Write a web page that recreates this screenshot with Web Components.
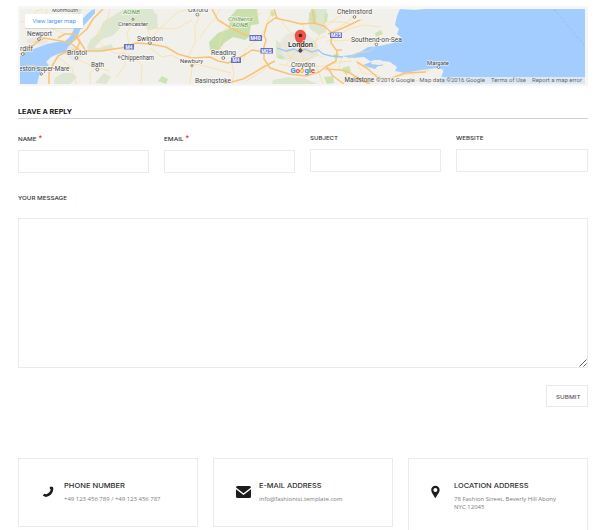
<!DOCTYPE html>
<html lang="en"><head><meta charset="utf-8"><title>Contact</title>
<style>
html,body{margin:0;background:#fff}
body{width:604px;height:530px;overflow:hidden;font-family:"Open Sans","Noto Sans",sans-serif;color:#222}
</style></head><body>
<contact-page></contact-page>
<script>
const define=(name,html,setup)=>customElements.define(name,class extends HTMLElement{
  connectedCallback(){
    if(this.shadowRoot)return;
    const t=document.createElement('template');t.innerHTML=html;
    this.attachShadow({mode:'open'}).append(t.content.cloneNode(true));
    if(setup)setup(this,this.shadowRoot);
  }
});

/* One line of text stretched to a given measure. */
define('fit-text',`<style>:host{display:block;white-space:nowrap}span{display:inline-block;transform-origin:0 0}</style><span><slot></slot></span>`,(el,root)=>{
  const s=root.querySelector('span'),w=+el.getAttribute('measure');
  s.style.transform='scaleX('+w/s.getBoundingClientRect().width+')';
  el.style.width=w+'px';
});

define('area-map',`<style>
:host{display:block;box-sizing:border-box;height:80px;padding:3px 3px 2px 2px;background:#f6f6f6}
svg{display:block;width:565px;height:75px;font-family:Roboto,sans-serif}
.l text{fill:#484848;stroke:#fff;stroke-width:1.3;paint-order:stroke;stroke-opacity:.7}
.m{fill:none;stroke:#f9c377;stroke-width:1.5;stroke-linejoin:round}.n{fill:none;stroke:#fbdc9a;stroke-width:.7}
.d circle{fill:#fff;stroke:#555;stroke-width:.7}
.s rect{fill:#6470c4}.s text{fill:#fff;font-size:4.5px;font-weight:700}
</style>
<svg viewBox="20 9 565 75">
<rect x="20" y="9" width="565" height="75" fill="#f2f0eb"/>
<g fill="#dde6d0">
<path d="M72 9 82 9 78 20 72 25Z M103 22 124 9 153 9 157 19 157 28 149 30 142 23 130 26 122 24 118 31 112 36 102 39 94 48 87 47 91 39 99 33Z M87 47 99 48 111 44 114 49 103 52 88 51Z M55 78 63 73 72 73 77 77 70 84 54 84Z M104 73 111 77 106 84 95 83Z M276 40 285 47 289 60 276 58Z M150 13 157 14 158 28 150 30Z"/>
<path d="M311 9 327 9 325 20 326 32 319 35 310 29 308 22Z M273 80 288 77 306 79 317 84 272 84Z"/>
</g>
<path d="M237 9 257 9 259 24 251 25 249 37 245 40 233 37 224 43 219 50 210 50 209 42 218 33 229 29 230 17Z" fill="#c9dfac"/>
<g fill="#cde3b4"><path d="M127 9h10l-2 6-7-2Z M158 81l4-5 6 3-2 5Z M309 13l6-4 2 8-3 7-5-4Z M325 12l3 2-1 7-3 3Z M270 12l3-2 2 5-3 2Z M375 33l6-3 2 4-7 3Z M333 55l5-2 2 4-5 2Z M354 54l3 1-1 3-3-1Z M342 68l7-2 2 5-5 4Z M324 77l9-1 1 7-7 1Z M279 55l5 1-1 4-5-2Z"/></g>
<g fill="#e9e7e2"><path d="M280 42 286 34 297 31 308 35 318 44 318 56 308 61 291 62 282 55Z M69 46 80 48 82 57 73 61 65 54Z M27 39 42 36 49 42 42 45 27 43Z"/></g>
<g fill="#a3ccff">
<path d="M20 56 24 55 23 51 31 50 39 47 47 44 57 42 65 41 69 38 72 33 75 27 80 22 86 15 92 10 95 9 95 13 87 22 81 28 78 35 73 42 68 47 66 52 58 54 51 57 46 62 49 65 41 70 39 76 37 84 20 84Z"/>
<path d="M400 9 397 16 395 25 399 29 397 34 402 38 393 43 379 46 368 47 362 51 351 55 342 56 350 58 364 57 370 61 381 61 390 62 397 67 395 71 405 73 421 70 437 68 444 69 442 75 439 84 585 84 585 9Z"/>
<path d="M363 65 371 62 379 65 375 69 368 67Z"/>
</g>
<path d="M399 10 415 10 425 9 415 9Z M373 60 382 60 379 65 371 64Z M382 61 388 62 384 65 379 64Z" fill="#eef0e7"/>
<g class="n">
<path d="M20 22 31 20 36 11 43 9 M20 48 29 45 39 39 M47 9 44 21 51 28 65 34 M110 9 107 22 98 31 96 39 105 47 114 53 130 54 142 65 141 84 M124 51 125 65 116 78 M58 57 72 68 76 84 M77 59 92 66 110 71 M133 19 127 34 129 43 121 51 M133 19 146 25 150 35 148 43 M150 38 165 24 178 12 189 9 M150 48 162 57 172 55 184 62 196 65 M202 9 195 27 195 43 188 57 192 68 190 84 M192 63 212 68 231 73 M220 9 214 20 206 28 200 38 M225 58 219 44 224 30 244 21 261 13 M244 61 245 50 258 39 265 28 271 13 M246 81 261 72 272 62 M231 61 234 73 232 84 M151 28 176 29 192 20 M20 67 34 65 45 68 61 66 70 67 M90 84 90 73 100 64"/>
<path d="M270 9 281 20 287 29 296 37 301 47 307 52 314 48 317 38 324 28 337 18 350 9 M281 45 291 41 300 49 314 54 323 57 M286 65 293 55 301 48 310 43 325 36 M290 35 298 42 304 61 303 73 M286 52 297 51 306 47 316 47 M302 21 305 33 302 46 M332 31 343 25 354 17 369 9 M326 42 339 36 348 29 364 25 381 27 M333 41 348 40 360 41 375 43 M279 64 293 67 308 64 321 67 340 62 352 61 M307 60 318 70 323 84 M342 57 339 68 350 79 M356 60 362 73 377 75 389 81 M382 83 398 76 416 73 430 70 M412 71 416 84 M320 22 341 22 351 24 363 19 M286 47 289 57 300 62 312 57 321 48 M348 59 357 53 370 51 378 44"/>
</g>
<g class="m">
<path d="M20 54 28 51 37 42 44 38 61 41 70 43 81 51 100 51 121 48 136 43 150 44 166 47 178 54 192 58 210 57 218 61 228 63 237 59 246 54 252 50 265 52 271 50 M58 38 65 34 74 34 80 41 77 49 66 52 58 56 52 66 49 73 49 84 M72 42 80 35 87 29 93 19 103 9 M74 34 80 42 86 51 M212 9 218 20 231 28 245 35 263 37 M264 35 267 24 275 18 289 21 301 24 314 23 324 26 332 33 331 43 337 51 336 61 327 66 319 72 306 76 289 74 270 68 264 59 264 47 266 40 264 35 M224 84 243 79 257 71 265 66 275 61 M274 9 277 18 M312 9 315 23 M328 34 343 28 360 20 M337 50 342 50 M325 69 342 70 350 73 361 80 370 84 M357 62 368 69 378 78 389 79 405 73 426 72 M327 67 333 76 344 84"/>
</g>
<g fill="none" stroke="#9bc7fa" stroke-width="1"><path d="M277 48 286 51 294 49 300 52 305 49 312 52 318 50 323 54 331 56 343 57" stroke-width="1.3"/><path d="M374 66 383 65 M440 67 444 71"/></g>
<path d="M554 9 564 21 574 33 585 46" fill="none" stroke="#86aee5" stroke-width=".5" stroke-dasharray="3 2"/>
<g class="d"><circle cx="39" cy="39" r="1.4"/><circle cx="22.700" cy="54" r="1.4"/><circle cx="76.500" cy="58" r="1.4"/><circle cx="97.300" cy="69.500" r="1.4"/><circle cx="41.300" cy="74" r="1.2"/><circle cx="133" cy="19.300" r="1"/><circle cx="119.300" cy="57" r="1"/><circle cx="150" cy="43" r="1.4"/><circle cx="197.300" cy="14.600" r="1.4"/><circle cx="223.300" cy="58" r="1.4"/><circle cx="192" cy="65.600" r="1"/><circle cx="354.500" cy="17" r="1.3"/><circle cx="376.400" cy="44.400" r="1.3"/><circle cx="438.500" cy="67.300" r="1.2"/></g>
<g class="s"><rect x="124" y="44" width="10" height="5.500"/><text x="125.500" y="48.500" textLength="7">M4</text><rect x="249.500" y="35" width="12.500" height="6"/><text x="250.500" y="39.800" textLength="10">M40</text><rect x="260.500" y="48" width="12.500" height="5.500"/><text x="261.500" y="52.500" textLength="10">M25</text><rect x="231" y="57.500" width="10" height="5.500"/><text x="232.500" y="62" textLength="7">M4</text><rect x="330" y="32.500" width="12" height="5.500"/><text x="331" y="37" textLength="10">M25</text></g>
<path d="M300.400 50C300 44 295 41 295 35.500a5.400 5.400 0 0 1 10.800 0C305.800 41 300.800 44 300.400 50Z" fill="#ee5148" stroke="#b33c35" stroke-width=".5"/><circle cx="300.400" cy="35.500" r="1.800" fill="#651515"/>
<circle cx="300.400" cy="50.600" r="1.600" fill="#555" stroke="#333" stroke-width=".8"/>
<g class="l" font-size="7">
<text x="52" y="12" textLength="26" font-size="6">Monmouth</text><text x="27" y="36" textLength="25">Newport</text><text x="20" y="51" textLength="13">rdiff</text><text x="67" y="55" textLength="20">Bristol</text><text x="91" y="66.500" textLength="13">Bath</text><text x="19" y="71" textLength="50.500">eston-super-Mare</text><text x="118" y="26" textLength="30" font-size="6">Cirencester</text><text x="121" y="59.500" textLength="33" font-size="6.300">Chippenham</text><text x="137" y="40.500" textLength="26">Swindon</text><text x="188" y="11.500" textLength="20" font-size="6.500">Oxford</text><text x="211" y="55" textLength="25">Reading</text><text x="180" y="63.300" textLength="23" font-size="6">Newbury</text><text x="195" y="83" textLength="36">Basingstoke</text><text x="288" y="47" textLength="25" font-weight="500" style="fill:#222">London</text><text x="291" y="66.500" textLength="24" font-size="6.300">Croydon</text><text x="337" y="14" textLength="35">Chelmsford</text><text x="351" y="41.500" textLength="51">Southend-on-Sea</text><text x="427" y="64.800" textLength="22" font-size="6">Margate</text>
<g font-style="italic" style="--g:#5d9648"><text x="123" y="13.500" textLength="17" font-size="6" style="fill:var(--g)">AONB</text><text x="228" y="20.500" textLength="25" font-size="6" style="fill:var(--g)">Chilterns</text><text x="232" y="27" textLength="16" font-size="6" style="fill:var(--g)">AONB</text></g>
</g>
<text x="290.500" y="73.300" textLength="24.500" font-size="7" font-weight="700"><tspan fill="#4285f4">G</tspan><tspan fill="#ea4335">o</tspan><tspan fill="#fbbc05">o</tspan><tspan fill="#4285f4">g</tspan><tspan fill="#34a853">l</tspan><tspan fill="#ea4335">e</tspan></text>
<rect x="375" y="77" width="210" height="7" fill="#f3f3f1" opacity=".72"/>
<g font-size="6" fill="#6a6a6a"><text x="344.500" y="82.200" textLength="29.500" fill="#484848" font-size="6.300">Maidstone</text><text x="376" y="82.200" textLength="109">©2016 Google · Map data ©2016 Google</text><text x="491" y="82.200" textLength="35">Terms of Use</text><text x="532" y="82.200" textLength="50">Report a map error</text></g>
<rect x="25" y="14.500" width="58" height="14.500" rx=".8" fill="#b9b9b9" opacity=".5"/><rect x="25" y="14" width="58" height="14" rx=".8" fill="#fff"/><text x="32.500" y="23.300" textLength="43.500" font-size="6.200" fill="#4c97f5">View larger map</text>
</svg>`,(el,r)=>r.querySelectorAll('text').forEach(t=>t.setAttribute('lengthAdjust','spacingAndGlyphs')));

define('section-title',`<style>:host{display:block;box-sizing:border-box;height:14px;border-bottom:1px solid #cfcfcf;padding-top:1px;font:700 6.500px/12px Inter,sans-serif;color:#111}</style><slot></slot>`);

define('form-field',`<style>
:host{display:block;min-width:0}
.c{display:flex;gap:2px;height:9px;font:500 5.300px/11px Inter,sans-serif;color:#333}
i{font:600 6.500px/7px "Open Sans",sans-serif;color:#f02b38;display:none}
:host([required]){padding-top:1px}:host([required]) i{display:block}
input,textarea{display:block;box-sizing:border-box;width:100%;height:23px;margin:7px 0 0;padding:4px;border:1px solid #ebebeb;border-radius:0;background:#fff;outline:0}
textarea{height:150px;margin-top:16px;resize:none}
.b{display:grid}.b>*{grid-area:1/1}svg{place-self:end;margin:0 1px 1px 0;width:8px;height:8px;pointer-events:none}
</style><div class="c"><slot></slot><i>*</i></div><div class="b"></div>`,(el,r)=>{
  r.querySelector('.b').innerHTML=el.hasAttribute('multiline')?'<textarea aria-label="Message"></textarea><svg viewBox="0 0 8 8"><path d="M.5 7.500 7.500.500M4.500 7.500l3-3" stroke="#444" fill="none" stroke-width=".9"/></svg>':'<input>';
});

define('submit-button',`<style>:host{display:block;width:42px;height:22px}button{box-sizing:border-box;display:flex;width:42px;height:22px;padding:2px 0 0 7px;align-items:center;border:1px solid #e8e8ec;background:#fff;font:500 5.400px/8px Inter,sans-serif;color:#5c5568}</style><button><slot></slot></button>`);

define('info-card',`<style>
:host{display:flex;box-sizing:border-box;border:1px solid #ebebeb;height:69px;padding:22px 0 0 21px}
:host([tall]){height:77px}
.i{width:24px;height:20px;display:grid;place-items:center start;flex:none;color:#1d1d1f}
.t{font:500 6.500px/9px Inter,sans-serif;color:#2a2a2a;padding-top:1px}.p{font:6px/8px "Open Sans",sans-serif;color:#7c7c7c;margin-top:4px}
</style><div class="i"><slot name="icon"></slot></div><div><div class="t"><slot name="title"></slot></div><div class="p"><slot></slot></div></div>`);

define('contact-page',`<style>
:host{display:block;padding:6px 16px 0 18px}
section-title{margin-top:19px;margin-bottom:14px}
.f{display:grid;grid-template-columns:131px 131px 131px 132px;column-gap:15px;height:60px}
.s{display:flex;justify-content:flex-end;margin:17px 0 51px}
.k{display:grid;grid-template-columns:repeat(3,180px);column-gap:15px;align-items:start}
svg{display:block}
</style>
<area-map></area-map>
<section-title><fit-text measure="54">LEAVE A REPLY</fit-text></section-title>
<div class="f"><form-field required><fit-text measure="18.500">NAME</fit-text></form-field><form-field required><fit-text measure="19.500">EMAIL</fit-text></form-field><form-field><fit-text measure="28">SUBJECT</fit-text></form-field><form-field><fit-text measure="27.500">WEBSITE</fit-text></form-field></div>
<form-field multiline><fit-text measure="49">YOUR MESSAGE</fit-text></form-field>
<div class="s"><submit-button><fit-text measure="24.500">SUBMIT</fit-text></submit-button></div>
<div class="k">
<info-card><svg slot="icon" width="16" height="14" viewBox="0 0 16 14" style="margin-top:1px"><path d="M10.600 1.400 12.900 2.100C14.400 5.800 11.200 11.900 5.600 12L2.700 10.600 4.400 8.700 6.400 9.200C8.800 8.200 10.300 6.500 10.700 4.500L9.400 3.100Z" fill="#1d1d1f"/></svg><fit-text slot="title" measure="61">PHONE NUMBER</fit-text><fit-text measure="96.500">+49 123 456 789 / +49 123 456 787</fit-text></info-card>
<info-card><svg slot="icon" width="17" height="14" viewBox="0 0 17 14" style="margin-top:1px"><path d="M1 2.500Q1 1 2.500 1H14.500Q16 1 16 2.500L8.500 8.300Z M1 4.200 8.500 9.900 16 4.200V11.500Q16 13 14.500 13H2.500Q1 13 1 11.500Z" fill="#1d1d1f"/></svg><fit-text slot="title" measure="62.500">E-MAIL ADDRESS</fit-text><fit-text measure="83.500">info@fashionist.template.com</fit-text></info-card>
<info-card tall><svg slot="icon" width="12" height="14" viewBox="0 0 12 14" style="margin-top:1px"><path fill-rule="evenodd" d="M5.300 13.500C4.300 10.500 1.200 8 1.200 4.900a4.200 4.200 0 0 1 8.400 0C9.600 8 6.300 10.500 5.300 13.500ZM5.400 3a2 2 0 1 0 0 4 2 2 0 0 0 0-4Z" fill="#1d1d1f"/></svg><fit-text slot="title" measure="74.500">LOCATION ADDRESS</fit-text><fit-text measure="102">78 Fashion Street, Beverly Hill Abony</fit-text><fit-text measure="30.500">NYC 12045</fit-text></info-card>
</div>`);
</script></body></html>
